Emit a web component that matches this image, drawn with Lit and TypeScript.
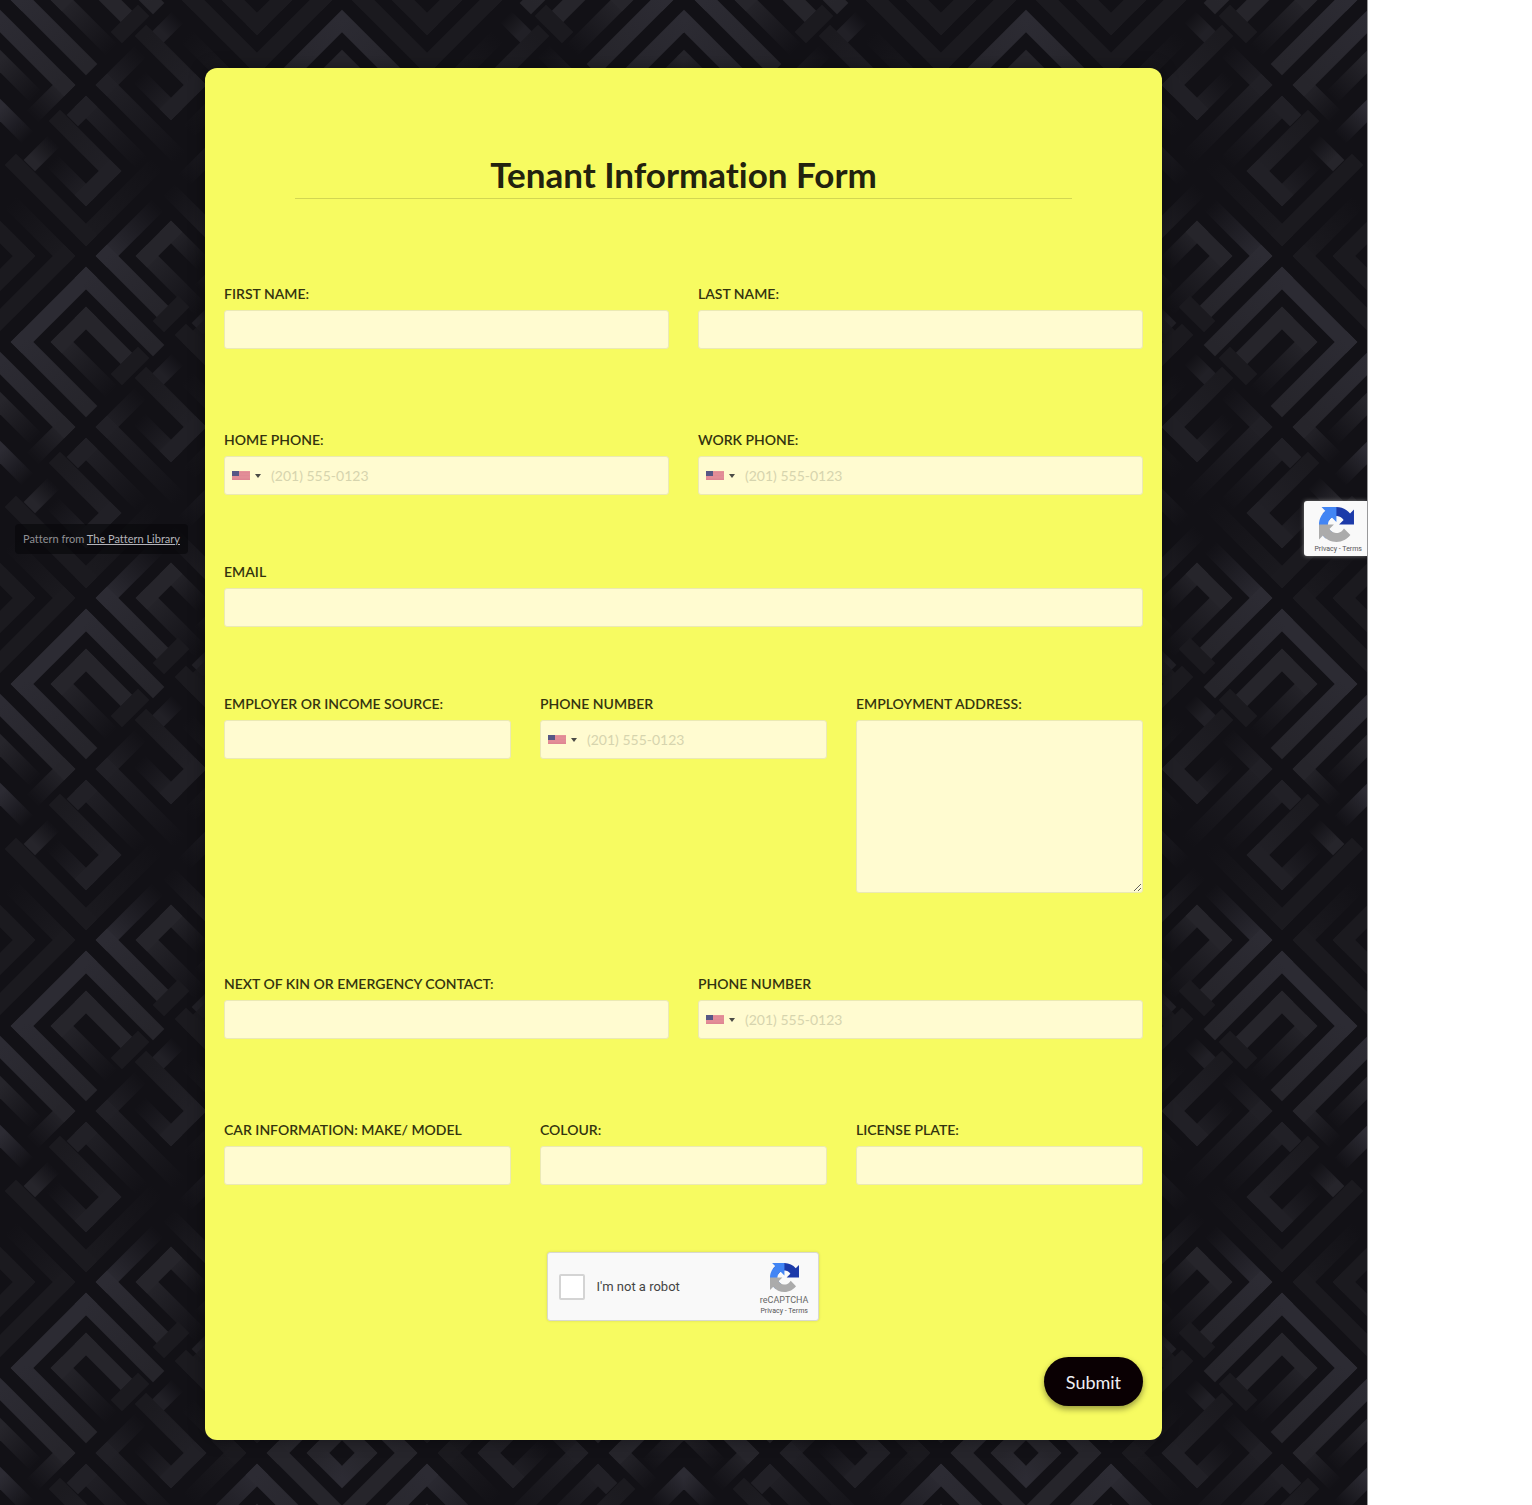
import { LitElement, html, svg, css, nothing } from "lit";
import { customElement, property } from "lit/decorators.js";

const BRIGHT = "#2c2b33";
const SOFT = "#26252b";
const MID = "#212026";
const DIM = "#1b1a1f";
const DARK = "#121116";

/** One woven band: x1, y1, x2, y2, start colour, end colour. DARK ends fade out. */
type Band = [number, number, number, number, string, string];

/** Left half of the pattern tile; the right half is its mirror image. */
const BANDS: Band[] = [
  // cell at 86,0
  [86, -64, 22, 0, BRIGHT, BRIGHT],
  [22, 0, 86, 64, BRIGHT, SOFT],
  [86, -64, 153, 3, BRIGHT, SOFT],
  [86, -24, 62, 0, SOFT, SOFT],
  [62, 0, 112, 50, SOFT, DARK],
  [86, -24, 121, 11, SOFT, SOFT],
  [138, 16, 122, 32, DIM, DIM],
  [178, 17, 163, 32, DARK, MID],
  // cell at 0,85
  [0, 21, 64, 85, BRIGHT, SOFT],
  [64, 85, 32, 117, SOFT, DARK],
  [0, 61, 36, 97, SOFT, DARK],
  [0, 110, 28, 138, BRIGHT, DARK],
  // cell at 171,85
  [107, 85, 141, 51, MID, DARK],
  [107, 85, 180, 158, MID, DARK],
  [146, 36, 195, 85, DIM, MID],
  [195, 85, 171, 109, MID, MID],
  [171, 109, 139, 77, MID, DARK],
  [186, 36, 235, 85, DARK, DIM],
  [235, 85, 188, 132, DIM, DARK],
  // cell at 86,171
  [86, 107, 78, 115, MID, MID],
  [86, 107, 142, 163, MID, DARK],
  [60, 121, 110, 171, DIM, MID],
  [110, 171, 86, 195, MID, MID],
  [86, 195, 52, 161, MID, DARK],
  [54, 141, 35, 160, DARK, SOFT],
  [16, 165, 86, 235, DIM, DIM],
  [86, 235, 158, 163, DIM, DARK],
  // cell at 0,256
  [0, 232, 24, 256, DIM, DIM],
  [24, 256, 0, 280, DIM, DIM],
  [10, 202, 64, 256, DARK, DIM],
  [64, 256, 0, 320, DIM, DIM],
  // cell at 171,256
  [107, 256, 158, 205, BRIGHT, DARK],
  [107, 256, 160, 309, BRIGHT, SOFT],
  [147, 256, 171, 232, SOFT, SOFT],
  [171, 232, 203, 264, SOFT, DARK],
  [147, 256, 200, 309, SOFT, DARK],
  [168, 189, 235, 256, DARK, SOFT],
  [235, 256, 200, 291, SOFT, DARK],
  [178, 307, 164, 321, DIM, DIM],
  [215, 311, 203, 323, DARK, MID],
  // cell at 257,0
  [257, -64, 193, 0, DARK, DIM],
  [186, -7, 257, 64, DIM, DIM],
  [257, 64, 321, 0, DIM, DIM],
  [321, 0, 257, -64, DIM, DIM],
  [233, 0, 257, 24, DIM, DIM],
  [257, 24, 281, 0, DIM, DIM],
  [281, 0, 257, -24, DIM, DIM],
  [257, -24, 233, 0, DIM, DIM],
  // cell at 342,85
  [342, 21, 278, 85, BRIGHT, SOFT],
  [278, 85, 342, 149, SOFT, SOFT],
  [342, 61, 318, 85, SOFT, SOFT],
  [318, 85, 342, 109, SOFT, BRIGHT],
  // cell at 257,171
  [257, 107, 184, 180, BRIGHT, DARK],
  [257, 107, 321, 171, BRIGHT, SOFT],
  [321, 171, 257, 235, SOFT, SOFT],
  [257, 147, 233, 171, SOFT, SOFT],
  [257, 147, 281, 171, SOFT, SOFT],
  [281, 171, 257, 195, SOFT, SOFT],
  [257, 195, 233, 171, SOFT, SOFT],
  // cell at 342,256
  [342, 192, 278, 256, DIM, DIM],
  [278, 256, 342, 320, DIM, DIM],
  [342, 232, 318, 256, DIM, DIM],
  [318, 256, 342, 280, DIM, DIM],
];

const alpha = (c: string) => (c === DARK ? 0 : 1);

@customElement("woven-backdrop")
export class WovenBackdrop extends LitElement {
  static styles = css`
    :host {
      display: block;
    }
    .art {
      display: block;
      width: 100%;
      height: 100%;
    }
  `;

  render() {
    return html`
      <svg class="art" aria-hidden="true">
        <defs>
          ${BANDS.map(
            ([x1, y1, x2, y2, a, b], i) => svg`
              <linearGradient id="g${i}" gradientUnits="userSpaceOnUse"
                x1=${x1} y1=${y1} x2=${x2} y2=${y2}>
                <stop offset="0" stop-color=${a === DARK ? b : a} stop-opacity=${alpha(a)}></stop>
                <stop offset="1" stop-color=${b === DARK ? a : b} stop-opacity=${alpha(b)}></stop>
              </linearGradient>`
          )}
          <g id="bands" fill="none" stroke-width="16" stroke-linecap="square">
            ${BANDS.map(
              ([x1, y1, x2, y2], i) =>
                svg`<line x1=${x1} y1=${y1} x2=${x2} y2=${y2} stroke="url(#g${i})"></line>`
            )}
          </g>
          <clipPath id="halfclip"><rect width="342" height="342"></rect></clipPath>
          <g id="half" clip-path="url(#halfclip)">
            <use href="#bands"></use>
            <use href="#bands" y="342"></use>
          </g>
          <pattern id="tile" width="684" height="342" patternUnits="userSpaceOnUse">
            <rect width="684" height="342" fill=${DARK}></rect>
            <use href="#half"></use>
            <use href="#half" transform="translate(684 0) scale(-1 1)"></use>
          </pattern>
        </defs>
        <rect width="100%" height="100%" fill="url(#tile)"></rect>
      </svg>
    `;
  }
}

const captchaLogo = html`
  <svg class="logo" viewBox="0 0 64 64" aria-hidden="true">
    <path
      fill="#1c3aa9"
      d="M64 31.955l-.033-1.37V4.687l-7.16 7.16C50.948 4.674 42.033.093 32.05.093c-10.4 0-19.622 4.96-25.458 12.64l11.736 11.86a15.55 15.55 0 0 1 4.754-5.334c2.05-1.6 4.952-2.906 8.968-2.906.485 0 .86.057 1.135.163 4.976.393 9.288 3.14 11.828 7.124l-8.307 8.307L64 31.953"
    ></path>
    <path
      fill="#4285f4"
      d="M31.862.094l-1.37.033H4.594l7.16 7.16C4.58 13.147 0 22.06 0 32.046c0 10.4 4.96 19.622 12.64 25.458L24.5 45.768a15.55 15.55 0 0 1-5.334-4.754c-1.6-2.05-2.906-4.952-2.906-8.968 0-.485.057-.86.163-1.135.393-4.976 3.14-9.288 7.124-11.828l8.307 8.307L31.86.095"
    ></path>
    <path
      fill="#ababab"
      d="M.001 32.045l.033 1.37v25.898l7.16-7.16c5.86 7.173 14.774 11.754 24.76 11.754 10.4 0 19.622-4.96 25.458-12.64l-11.736-11.86a15.55 15.55 0 0 1-4.754 5.334c-2.05 1.6-4.952 2.906-8.968 2.906-.485 0-.86-.057-1.135-.163-4.976-.393-9.288-3.14-11.828-7.124l8.307-8.307c-10.522.04-22.4.066-27.295-.005"
    ></path>
  </svg>
`;

const flag = html`
  <svg class="flag" viewBox="0 0 18 9" aria-hidden="true">
    <rect width="18" height="9" fill="#e6929a"></rect>
    <path
      d="M0 1.5h18M0 3h18M0 4.5h18M0 6h18M0 7.5h18"
      stroke="#dc8492"
      stroke-width=".6"
    ></path>
    <path d="M0 8.7h18" stroke="#d9788a" stroke-width=".6"></path>
    <rect width="7" height="5" fill="#575785"></rect>
  </svg>
`;

@customElement("form-field")
export class FormField extends LitElement {
  @property() label = "";
  @property() kind: "text" | "email" | "tel" | "area" = "text";

  static styles = css`
    :host {
      display: block;
      min-width: 0;
    }
    .field {
      display: flex;
      flex-direction: column;
      gap: 6px;
    }
    .label {
      font-size: 14px;
      font-weight: 600;
      line-height: 20px;
      color: #33330f;
      text-transform: uppercase;
    }
    .box {
      display: flex;
      align-items: center;
      box-sizing: border-box;
      width: 100%;
      height: 39px;
      border: 1px solid #ebe9b4;
      border-radius: 3px;
      background: #fffbd0;
    }
    .area {
      height: 173px;
      margin: 0;
      padding: 8px;
      font: inherit;
      resize: vertical;
      outline: none;
    }
    .country {
      display: flex;
      align-items: center;
      gap: 5px;
      height: 100%;
      padding: 0 7px;
      border: 0;
      background: none;
    }
    .flag {
      width: 18px;
      height: 9px;
    }
    .caret {
      border: 3px solid transparent;
      border-top: 4px solid #4b4b46;
      border-bottom: 0;
    }
    .input {
      flex: 1;
      min-width: 0;
      height: 100%;
      box-sizing: border-box;
      padding: 0 8px;
      border: 0;
      outline: none;
      background: none;
      font: inherit;
      font-size: 14px;
      color: #33330f;
    }
    .tel {
      padding: 0 3px;
    }
    .input::placeholder {
      color: #d6d4ae;
      opacity: 1;
    }
  `;

  render() {
    return html`
      <div class="field">
        <label class="label" for="control">${this.label}</label>
        ${this.kind === "area"
          ? html`<textarea class="box area" id="control"></textarea>`
          : html`
              <div class="box">
                ${this.kind === "tel"
                  ? html`<button class="country" type="button" aria-label="Country">
                      ${flag}<span class="caret"></span>
                    </button>`
                  : nothing}
                <input
                  class="input ${this.kind}"
                  id="control"
                  type=${this.kind}
                  placeholder=${this.kind === "tel" ? "(201) 555-0123" : nothing}
                />
              </div>
            `}
      </div>
    `;
  }
}

@customElement("app-root")
export class AppRoot extends LitElement {
  static styles = css`
    :host {
      display: block;
      background: #fff;
      font-family: Lato, "Open Sans", sans-serif;
      font-variant-ligatures: none;
    }
    .page {
      position: relative;
      box-sizing: border-box;
      margin-right: 164px;
      padding: 68px 0 65px;
      border-right: 1px solid #98989a;
      background: #121116;
      overflow: hidden;
    }
    .backdrop {
      position: absolute;
      inset: 0;
    }
    .card {
      position: relative;
      display: flex;
      flex-direction: column;
      box-sizing: border-box;
      width: 70%;
      margin: 0 auto;
      padding: 88px 19px 34px;
      border-radius: 12px;
      background: #f7fb61;
      box-shadow: 0 0 16px rgba(0, 0, 0, 0.4);
    }
    .title {
      margin: 0 71px 85px;
      padding-bottom: 6px;
      border-bottom: 1px solid #d2d652;
      color: #22220e;
      font-size: 35px;
      font-weight: 700;
      line-height: 36px;
      text-align: center;
    }
    .row {
      display: grid;
      grid-auto-flow: column;
      grid-auto-columns: minmax(0, 1fr);
      gap: 29px;
      margin-bottom: 81px;
    }
    .tight {
      margin-bottom: 67px;
    }
    .captcha {
      display: flex;
      align-items: center;
      align-self: center;
      box-sizing: border-box;
      width: 272px;
      height: 69px;
      padding: 0 10px 0 11px;
      border: 1px solid #d8d8d0;
      border-radius: 3px;
      background: #f9f9f9;
      box-shadow: 0 0 3px rgba(0, 0, 0, 0.12);
      font-family: Roboto, sans-serif;
    }
    .check {
      appearance: none;
      box-sizing: border-box;
      width: 26px;
      height: 26px;
      margin: 0 11px 0 0;
      border: 2px solid #d4d4d4;
      border-radius: 2px;
      background: #fff;
    }
    .robot {
      flex: 1;
      color: #444;
      font-size: 13px;
      line-height: 16px;
    }
    .brand {
      display: flex;
      flex-direction: column;
      align-items: center;
      padding-top: 5px;
      color: #666;
    }
    .logo {
      width: 29px;
      height: 29px;
    }
    .name {
      padding-top: 2px;
      font-size: 9px;
      line-height: 12px;
    }
    .legal {
      color: #555;
      font-size: 7px;
      line-height: 10px;
      white-space: nowrap;
    }
    .legal a {
      color: inherit;
      text-decoration: none;
    }
    .submit {
      align-self: flex-end;
      margin-top: 36px;
      width: 99px;
      height: 49px;
      border: 0;
      border-radius: 25px;
      background: #0a0003;
      box-shadow: 0 3px 6px rgba(0, 0, 0, 0.4);
      color: #eeeef4;
      font: inherit;
      font-size: 18px;
    }
    .credit {
      position: absolute;
      left: 15px;
      top: 524px;
      padding: 0 8px;
      border-radius: 4px;
      background: rgba(8, 7, 10, 0.65);
      color: #8f8f93;
      font-size: 11px;
      line-height: 30px;
      white-space: nowrap;
    }
    .credit a {
      color: #b4b4ba;
    }
    .badge {
      position: absolute;
      right: 0;
      top: 501px;
      display: flex;
      flex-direction: column;
      align-items: flex-end;
      box-sizing: border-box;
      width: 63px;
      height: 55px;
      padding: 6px 5px 0 0;
      border-radius: 3px 0 0 3px;
      background: #f9f9f9;
      box-shadow: 0 0 4px #808080;
      font-family: Roboto, sans-serif;
    }
    .badge .logo {
      width: 35px;
      height: 35px;
      margin-right: 8px;
    }
    .badge .legal {
      padding-top: 2px;
    }
  `;

  private legal() {
    return html`<span class="legal"><a href="#privacy">Privacy</a> - <a href="#terms">Terms</a></span>`;
  }

  render() {
    return html`
      <main class="page">
        <woven-backdrop class="backdrop"></woven-backdrop>
        <form class="card">
          <h1 class="title">Tenant Information Form</h1>
          <div class="row">
            <form-field label="First Name:"></form-field>
            <form-field label="Last Name:"></form-field>
          </div>
          <div class="row tight">
            <form-field label="Home Phone:" kind="tel"></form-field>
            <form-field label="Work Phone:" kind="tel"></form-field>
          </div>
          <div class="row tight">
            <form-field label="Email" kind="email"></form-field>
          </div>
          <div class="row">
            <form-field label="Employer or Income Source:"></form-field>
            <form-field label="Phone Number" kind="tel"></form-field>
            <form-field label="Employment Address:" kind="area"></form-field>
          </div>
          <div class="row">
            <form-field label="Next of Kin or Emergency Contact:"></form-field>
            <form-field label="Phone Number" kind="tel"></form-field>
          </div>
          <div class="row tight">
            <form-field label="Car Information: Make/ Model"></form-field>
            <form-field label="Colour:"></form-field>
            <form-field label="License Plate:"></form-field>
          </div>
          <div class="captcha">
            <input class="check" id="robot" type="checkbox" />
            <label class="robot" for="robot">I'm not a robot</label>
            <div class="brand">
              ${captchaLogo}
              <span class="name">reCAPTCHA</span>
              ${this.legal()}
            </div>
          </div>
          <button class="submit" type="button">Submit</button>
        </form>
        <div class="credit">Pattern from <a href="#library">The Pattern Library</a></div>
        <aside class="badge">${captchaLogo}${this.legal()}</aside>
      </main>
    `;
  }
}
